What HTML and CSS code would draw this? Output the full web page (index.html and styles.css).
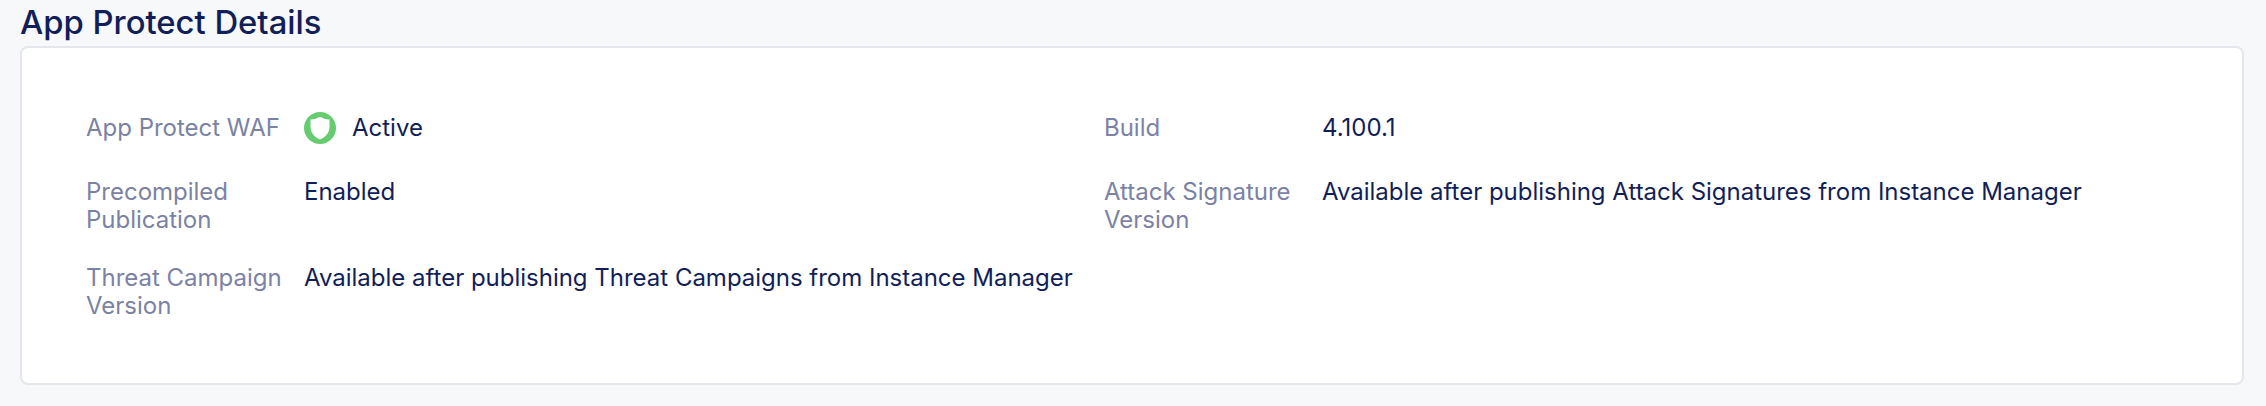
FILE: index.html
```html
<!DOCTYPE html>
<html lang="en">
<head>
<meta charset="utf-8">
<title>App Protect Details</title>
<link rel="stylesheet" href="styles.css">
</head>
<body>
<section class="details">
  <h2 class="title">App Protect Details</h2>
  <div class="card">
    <dl class="grid">
      <dt class="label">App Protect WAF</dt>
      <dd class="value status">
        <svg class="icon" viewBox="0 0 32 32" aria-hidden="true">
          <circle cx="16" cy="16" r="16" fill="#65cc70"/>
          <path d="M16 4.8 C18.8 6.4 21.6 7.4 25.5 7.5 V14.5 C25.5 20.6 21.8 25 16 27.6 C10.2 25 6.5 20.6 6.5 14.5 V7.5 C10.4 7.4 13.2 6.4 16 4.8 Z" fill="#fff"/>
        </svg>
        <span>Active</span>
      </dd>
      <dt class="label">Build</dt>
      <dd class="value">4.100.1</dd>
      <dt class="label">Precompiled Publication</dt>
      <dd class="value">Enabled</dd>
      <dt class="label">Attack Signature Version</dt>
      <dd class="value">Available after publishing Attack Signatures from Instance Manager</dd>
      <dt class="label">Threat Campaign Version</dt>
      <dd class="value">Available after publishing Threat Campaigns from Instance Manager</dd>
    </dl>
  </div>
</section>
</body>
</html>
```
FILE: styles.css
```css
* { box-sizing: border-box; }
body {
  margin: 0;
  background: #f6f8fa;
  color: #121e58;
  font-family: Inter, sans-serif;
  font-size: 24px;
  letter-spacing: -0.01px;
  line-height: 28px;
}
.details { padding: 0 22px 0 20px; }
.title {
  margin: 0;
  height: 46px;
  font-size: 32.8px;
  font-weight: 500;
  letter-spacing: 0;
  line-height: 44px;
}
.card {
  height: 339px;
  padding: 66px 64px 0;
  background: #fff;
  border: 2px solid #e4e6ec;
  border-radius: 8px;
}
.grid {
  display: grid;
  grid-template-columns: 202px 784px 202px 1fr;
  grid-template-rows: 34px;
  gap: 30px 16px;
  margin: 0;
}
.label { color: #7b82a4; }
.value { margin: 0; white-space: nowrap; }
.status {
  display: flex;
  align-items: center;
  gap: 16px;
  height: 28px;
}
.icon { width: 32px; height: 32px; }
```
